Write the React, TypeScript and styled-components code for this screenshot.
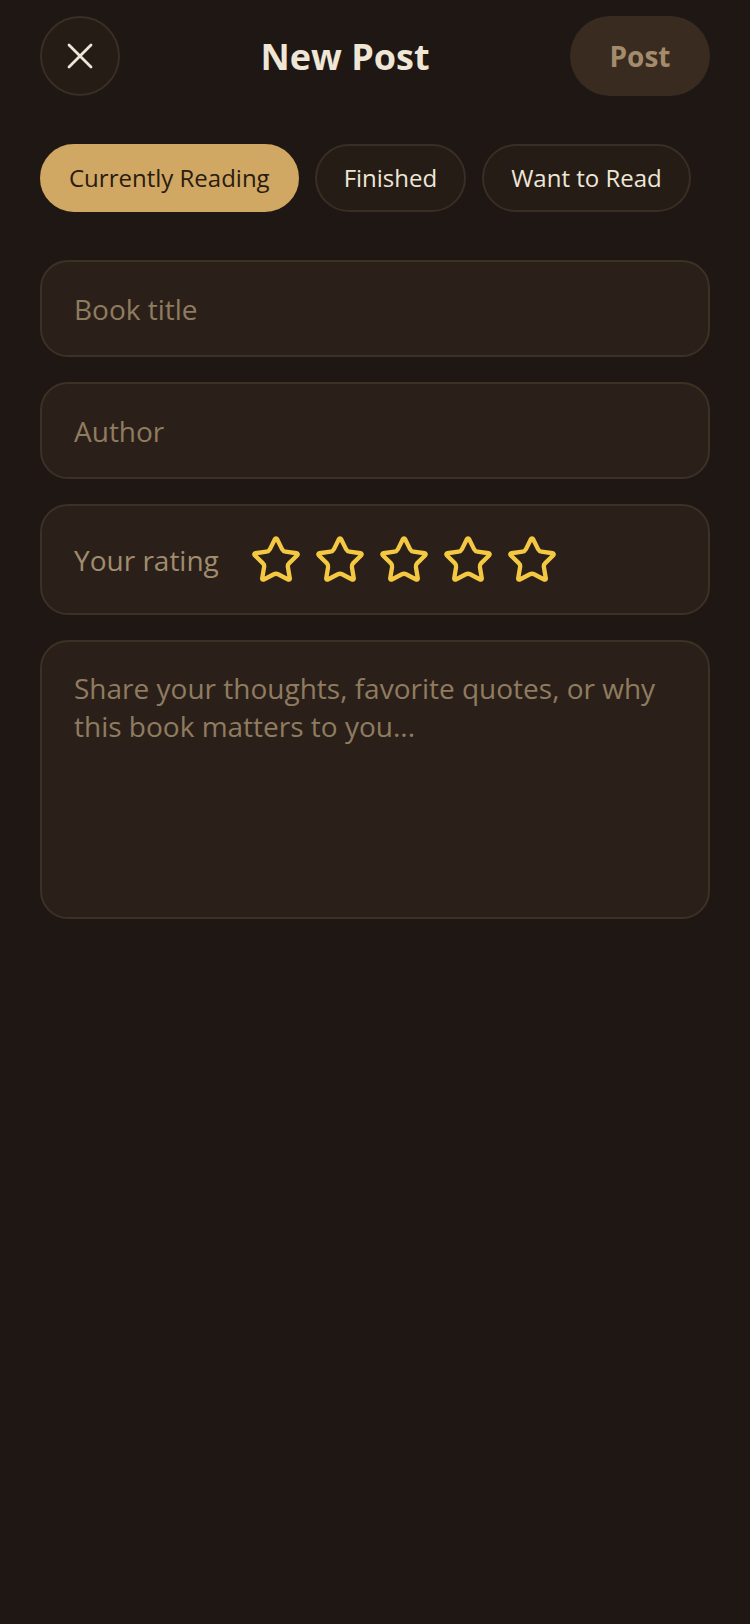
import { useState } from "react";
import styled, { createGlobalStyle } from "styled-components";

const GlobalStyle = createGlobalStyle`
  html, body {
    margin: 0;
    padding: 0;
    background-color: #1e1713;
  }
  * {
    box-sizing: border-box;
  }
`;

const Page = styled.div`
  min-height: 1624px;
  background-color: #1e1713;
  font-family: "Open Sans", "Noto Sans", sans-serif;
  padding: 16px 40px;
`;

const Header = styled.header`
  display: flex;
  align-items: center;
  justify-content: space-between;
  height: 80px;
`;

const CloseButton = styled.button`
  width: 80px;
  height: 80px;
  border-radius: 50%;
  border: 2px solid #3a2e24;
  background-color: #251c16;
  display: flex;
  align-items: center;
  justify-content: center;
  padding: 0;
  cursor: pointer;
`;

const Title = styled.h1`
  margin: 0;
  font-size: 36px;
  font-weight: 700;
  color: #efe6d6;
`;

const PostButton = styled.button`
  width: 140px;
  height: 80px;
  border-radius: 40px;
  border: none;
  background-color: #392b20;
  color: #a38b6c;
  font-family: inherit;
  font-size: 28px;
  font-weight: 700;
  cursor: pointer;
`;

const Chips = styled.div`
  display: flex;
  gap: 16px;
  margin-top: 48px;
`;

const Chip = styled.button<{ active: boolean }>`
  height: 68px;
  padding: 0 27px 2px;
  border-radius: 34px;
  font-family: inherit;
  font-size: 24px;
  border: 2px solid ${(props) => (props.active ? "#d0a763" : "#3a2e24")};
  background-color: ${(props) => (props.active ? "#d0a763" : "#251c16")};
  color: ${(props) => (props.active ? "#2a1c10" : "#efe6d6")};
  cursor: pointer;
`;

const Form = styled.div`
  display: flex;
  flex-direction: column;
  gap: 25px;
  margin-top: 48px;
`;

const Field = styled.input`
  height: 97px;
  width: 100%;
  padding: 0 32px;
  border-radius: 28px;
  border: 2px solid #3d3125;
  background-color: #2b2019;
  font-family: inherit;
  font-size: 28px;
  color: #efe6d6;
  outline: none;

  &::placeholder {
    color: #8f7c60;
  }
`;

const RatingBox = styled.div`
  height: 111px;
  display: flex;
  align-items: center;
  gap: 31px;
  padding: 0 32px;
  border-radius: 28px;
  border: 2px solid #3d3125;
  background-color: #2b2019;
`;

const RatingLabel = styled.span`
  font-size: 28px;
  color: #a08c6e;
`;

const Stars = styled.div`
  display: flex;
  gap: 12px;
`;

const StarButton = styled.button`
  background: none;
  border: none;
  padding: 0;
  display: flex;
  cursor: pointer;
`;

const Thoughts = styled.textarea`
  height: 279px;
  width: 100%;
  resize: none;
  padding: 28px 32px;
  border-radius: 28px;
  border: 2px solid #3d3125;
  background-color: #2b2019;
  font-family: inherit;
  font-size: 28px;
  line-height: 1.35;
  color: #efe6d6;
  outline: none;

  &::placeholder {
    color: #8f7c60;
  }
`;

const statuses = ["Currently Reading", "Finished", "Want to Read"];

function StarIcon({ filled }: { filled: boolean }) {
  return (
    <svg
      width="52"
      height="52"
      viewBox="0 0 24 24"
      fill={filled ? "#f5c842" : "none"}
      stroke="#f5c842"
      strokeWidth="2"
      strokeLinecap="round"
      strokeLinejoin="round"
    >
      <path d="M11.525 2.295a.53.53 0 0 1 .95 0l2.31 4.679a2.123 2.123 0 0 0 1.595 1.16l5.166.756a.53.53 0 0 1 .294.904l-3.736 3.638a2.123 2.123 0 0 0-.611 1.878l.882 5.14a.53.53 0 0 1-.771.56l-4.618-2.428a2.122 2.122 0 0 0-1.973 0L6.396 21.01a.53.53 0 0 1-.77-.56l.881-5.139a2.122 2.122 0 0 0-.611-1.879L2.16 9.795a.53.53 0 0 1 .294-.906l5.165-.755a2.122 2.122 0 0 0 1.597-1.16z" />
    </svg>
  );
}

export default function App() {
  const [status, setStatus] = useState("Currently Reading");
  const [rating, setRating] = useState(0);

  return (
    <>
      <GlobalStyle />
      <Page>
        <Header>
          <CloseButton aria-label="Close">
            <svg width="26" height="26" viewBox="0 0 26 26">
              <path
                d="M2 2 24 24M24 2 2 24"
                stroke="#efe6d6"
                strokeWidth="2.8"
                strokeLinecap="round"
              />
            </svg>
          </CloseButton>
          <Title>New Post</Title>
          <PostButton>Post</PostButton>
        </Header>

        <Chips>
          {statuses.map((s) => (
            <Chip key={s} active={s === status} onClick={() => setStatus(s)}>
              {s}
            </Chip>
          ))}
        </Chips>

        <Form>
          <Field placeholder="Book title" />
          <Field placeholder="Author" />
          <RatingBox>
            <RatingLabel>Your rating</RatingLabel>
            <Stars>
              {[1, 2, 3, 4, 5].map((n) => (
                <StarButton key={n} onClick={() => setRating(n)}>
                  <StarIcon filled={n <= rating} />
                </StarButton>
              ))}
            </Stars>
          </RatingBox>
          <Thoughts placeholder="Share your thoughts, favorite quotes, or why this book matters to you..." />
        </Form>
      </Page>
    </>
  );
}
